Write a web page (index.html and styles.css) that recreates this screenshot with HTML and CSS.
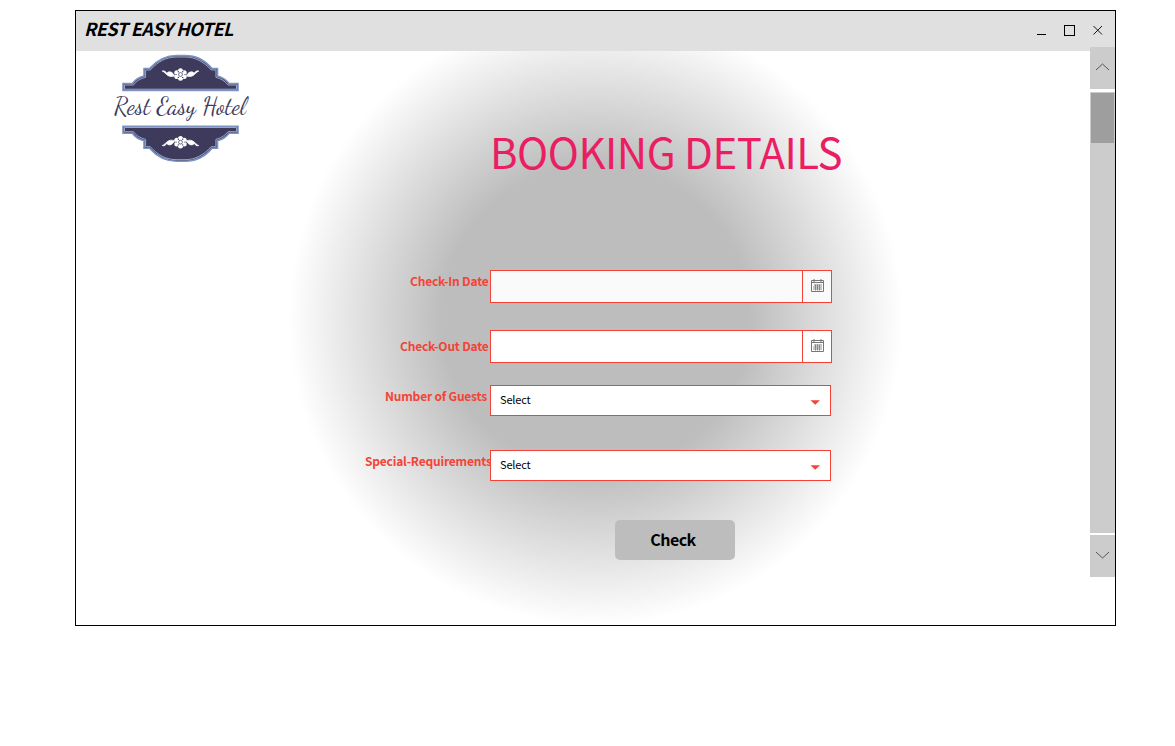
FILE: index.html
```html
<!DOCTYPE html>
<html lang="en">
<head>
<meta charset="utf-8">
<title>Rest Easy Hotel</title>
<link rel="stylesheet" href="styles.css">
</head>
<body>
<div class="window">
  <header class="titlebar">
    <span class="titlebar-name">REST EASY HOTEL</span>
    <svg class="titlebar-controls" width="68" height="14" viewBox="0 0 68 14" fill="none" stroke="#000">
      <path d="M1 11.500h9"/>
      <rect x="28.500" y="2.500" width="10" height="10"/>
      <path d="M57.500 3l8.500 8.500M66 3l-8.500 8.500" stroke-width=".9"/>
    </svg>
  </header>
  <div class="content">
    <div class="brand">
      <svg width="140" height="114" viewBox="110 51 140 114">
        <defs>
          <g id="plaque">
            <path d="M123 90.500V83.500H132.500Q136 78 144 76V68.500H149.500C157 60 166 55.500 177 55.500H185C196 55.500 205 60 212 68.500H217.500V76Q225 78 229 83.500H238V90.500Z" fill="#3d3a5c" stroke="#7d93c2" stroke-width="1.600"/>
            <path d="M124.500 89.200V85H133.500Q137 79.500 145.600 77.300V70H150.300C158 61.500 166 57 177 57H185C195 57 203.500 61.500 211.200 70H215.900V77.300Q224 79.500 228 85H236.500V89.200Z" fill="none" stroke="#a3b2d1" stroke-width=".9"/>
          </g>
          <g id="flower">
            <g fill="#fff">
              <circle cx="180.500" cy="70.800" r="2.500"/><circle cx="184.200" cy="72.700" r="2.500"/><circle cx="184.200" cy="76.500" r="2.500"/>
              <circle cx="180.500" cy="78.200" r="2.500"/><circle cx="176.800" cy="76.500" r="2.500"/><circle cx="176.800" cy="72.700" r="2.500"/>
              <path d="M174.500 76C170 77.500 166.500 75.500 167 73 169 70.500 173 72 174.500 76ZM168 75.500C166 71 163.500 70 162 71.500 163 70.500 165 73.500 168 75.500ZM186.500 76C191 77.500 194.500 75.500 194 73 192 70.500 188 72 186.500 76ZM193 75.500C195 71 197.500 70 199 71.500 198 70.500 196 73.500 193 75.500Z" stroke="#fff" stroke-width=".7"/>
            </g>
            <g fill="#3d3a5c">
              <circle cx="178.300" cy="71.800" r=".7"/><circle cx="182.700" cy="71.800" r=".7"/><circle cx="185" cy="74.600" r=".7"/>
              <circle cx="176" cy="74.600" r=".7"/><circle cx="178.300" cy="77.400" r=".7"/><circle cx="182.700" cy="77.400" r=".7"/>
            </g>
            <circle cx="180.500" cy="74.500" r="1.900" fill="#fff" stroke="#3d3a5c" stroke-width=".7"/>
          </g>
        </defs>
        <use href="#plaque"/>
        <use href="#flower"/>
        <use href="#plaque" transform="matrix(1 0 0 -1 0 216.700)"/>
        <use href="#flower" transform="matrix(1 0 0 -1 0 216.700)"/>
        <text class="brand-name" x="114" y="114" textLength="132" lengthAdjust="spacingAndGlyphs">Rest Easy Hotel</text>
      </svg>
    </div>
    <main class="booking">
      <h1 class="booking-title">BOOKING DETAILS</h1>
      <div class="row">
        <span class="label label-in">Check-In Date</span>
        <div class="field date date-muted">
          <span class="date-value"></span>
          <span class="date-button"><svg width="14" height="14"><use href="#calendar"/></svg></span>
        </div>
      </div>
      <div class="row row-out">
        <span class="label label-out">Check-Out Date</span>
        <div class="field date">
          <span class="date-value"></span>
          <span class="date-button"><svg width="14" height="14"><use href="#calendar"/></svg></span>
        </div>
      </div>
      <div class="row row-guests">
        <span class="label label-guests">Number of Guests</span>
        <div class="field select">Select<svg width="10" height="5"><path d="M.5 .3h9.500L5.200 4.800z" fill="#f44336"/></svg></div>
      </div>
      <div class="row row-special">
        <span class="label label-special">Special-Requirements</span>
        <div class="field select">Select<svg width="10" height="5"><path d="M.5 .3h9.500L5.200 4.800z" fill="#f44336"/></svg></div>
      </div>
      <button class="check" type="button">Check</button>
    </main>
    <div class="scrollbar">
      <div class="scroll-button"><svg width="15" height="8" fill="none" stroke="#555"><path d="M1 7l6.500-6 6.500 6"/></svg></div>
      <div class="scroll-track"><div class="scroll-thumb"></div></div>
      <div class="scroll-button"><svg width="15" height="8" fill="none" stroke="#555"><path d="M1 1l6.500 6 6.500-6"/></svg></div>
    </div>
  </div>
</div>
<svg class="symbols" width="0" height="0">
  <symbol id="calendar" viewBox="0 0 14 14">
    <g fill="none" stroke="#777">
      <path d="M.5 1.500h12v11H.5zM.5 3.500h12M3 0v3M10 0v3"/>
      <path d="M3 6h8M2 8h9M2 10h9M4.500 5.500v6M6.500 5.500v6M8.500 5.500v6" stroke-width=".8"/>
    </g>
  </symbol>
</svg>
</body>
</html>
```
FILE: styles.css
```css
* { box-sizing: border-box; }

body {
  margin: 0;
  padding: 10px 59px 0 75px;
  background: #fff;
  color: #000;
  font-family: "Noto Sans CJK SC", "Noto Sans", sans-serif;
}

.window {
  display: flex;
  flex-direction: column;
  width: 1041px;
  height: 616px;
  border: 1px solid #000;
  background: radial-gradient(circle 307px at center, #bdbdbd 50%, #fff 100%);
}

.titlebar {
  display: flex;
  align-items: center;
  justify-content: space-between;
  flex: none;
  height: 40px;
  padding: 0 11px 2px 8px;
  background: #e0e0e0;
}

.titlebar-name {
  font-size: 18px;
  font-weight: 700;
  font-style: italic;
  line-height: 24px;
  letter-spacing: -0.55px;
  padding-bottom: 4px;
  white-space: nowrap;
}

.content { display: flex; flex: 1; min-height: 0; }

.brand { width: 289px; padding-left: 34px; }
.brand svg { display: block; }

.brand-name {
  fill: #3d3a5c;
  font-family: "Dancing Script", "Liberation Serif", cursive;
  font-size: 25px;
}

.booking { flex: 1; padding-top: 70px; }

.booking-title {
  margin: 0 0 89px 125px;
  height: 60px;
  color: #e91e63;
  font-size: 42px;
  font-weight: 400;
  line-height: 60px;
  letter-spacing: -0.5px;
  white-space: nowrap;
}

.row { display: flex; align-items: flex-start; }
.row-out { margin-top: 27px; }
.row-guests { margin-top: 22px; }
.row-special { margin-top: 34px; }

.label {
  flex: none;
  width: 125px;
  height: 24px;
  color: #f44336;
  font-size: 12px;
  font-weight: 700;
  line-height: 22px;
  letter-spacing: -0.2px;
  white-space: nowrap;
}

.label-in { padding-left: 45px; }
.label-out { padding-left: 35px; margin-top: 5px; }
.label-guests { padding-left: 20px; }

.field { display: flex; border: 1px solid #f44336; background: #fff; }

.date { width: 342px; height: 33px; }
.date-muted { background: #fafafa; }
.date-value { flex: 1; }
.date-button {
  width: 29px;
  padding: 8px 0 0 8px;
  border-left: 1px solid #f44336;
}
.date-button svg { display: block; }

.select {
  justify-content: space-between;
  width: 341px;
  height: 31px;
  padding: 0 10px 0 9px;
  font-size: 11px;
  line-height: 26px;
  letter-spacing: -0.15px;
}
.select svg { margin-top: 14px; }

.check {
  display: block;
  width: 120px;
  height: 40px;
  margin: 39px 0 0 250px;
  padding: 0 4px 2px 0;
  border: 0;
  border-radius: 5px;
  background: #bdbdbd;
  color: #000;
  font: 700 16px/38px "Noto Sans CJK SC", "Noto Sans", sans-serif;
  letter-spacing: -0.55px;
}

.scrollbar {
  display: flex;
  flex-direction: column;
  width: 25px;
  height: 530px;
  margin-top: -4px;
  background: #fff;
}

.scroll-button {
  display: flex;
  align-items: center;
  justify-content: center;
  flex: none;
  height: 42px;
  padding-bottom: 2px;
  background: #ccc;
}

.scroll-track {
  flex: 1;
  margin: 3px 0 2px;
  padding: 1px;
  background: #ccc;
}

.scroll-thumb { height: 50px; background: #9e9e9e; }

.symbols { display: block; }
```
